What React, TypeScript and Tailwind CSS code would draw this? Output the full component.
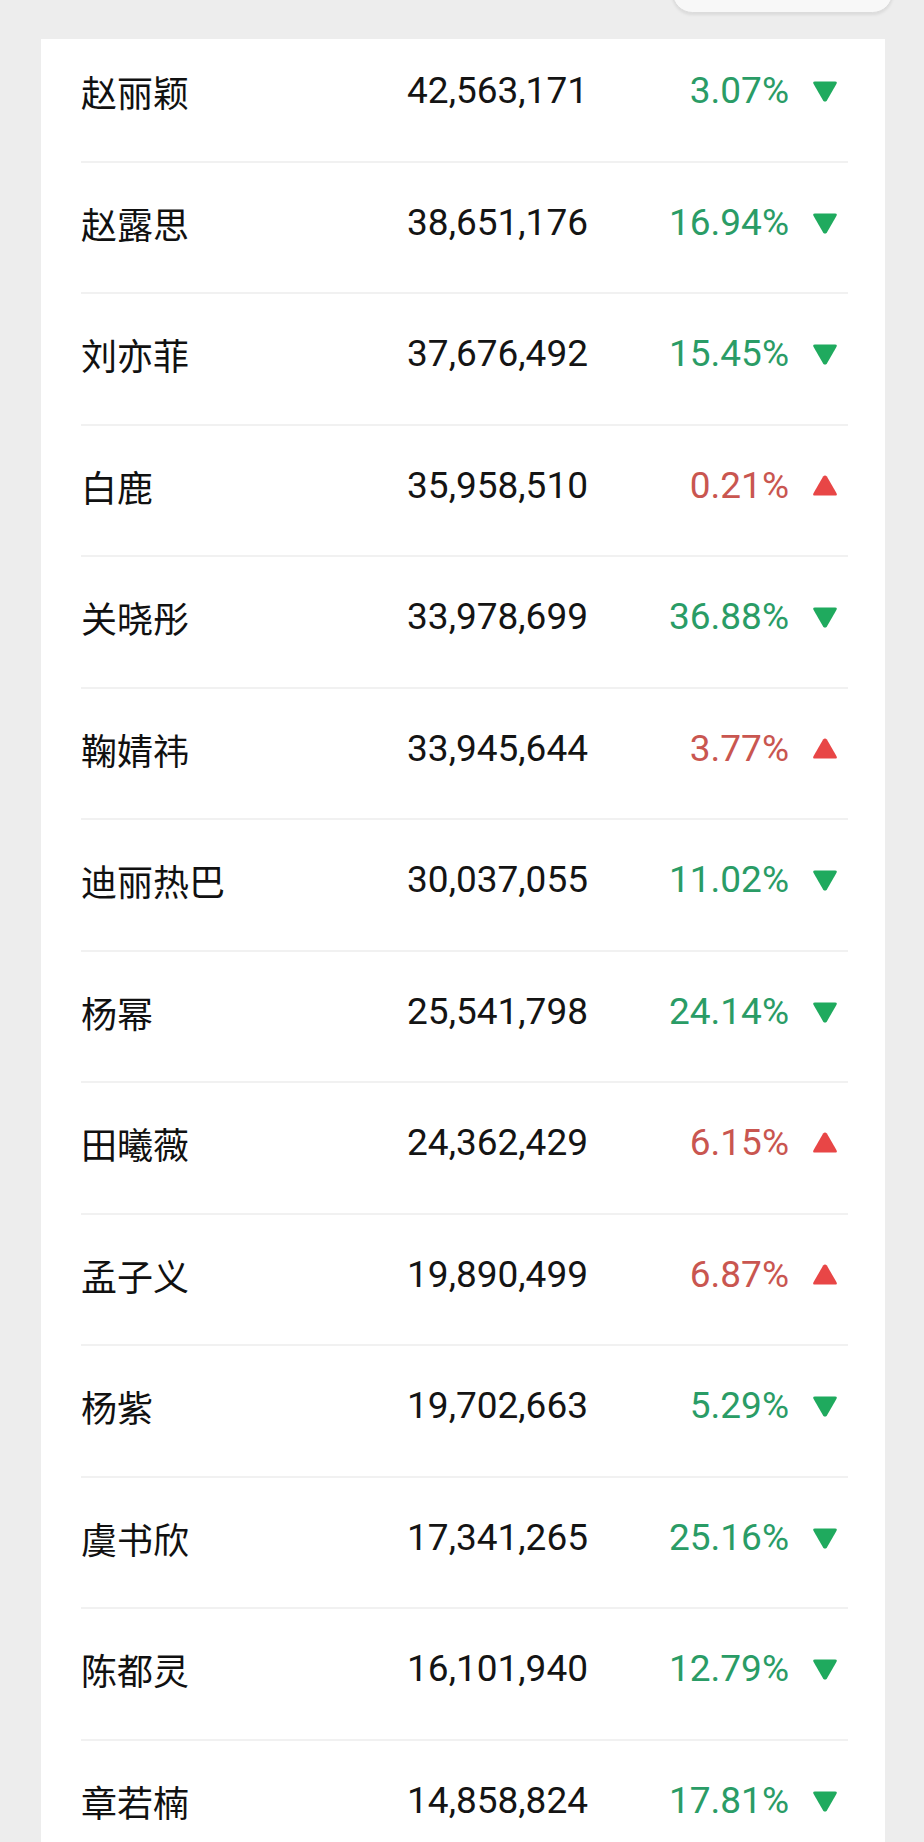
const rows = [
  { name: "赵丽颖", value: "42,563,171", pct: "3.07%", up: false },
  { name: "赵露思", value: "38,651,176", pct: "16.94%", up: false },
  { name: "刘亦菲", value: "37,676,492", pct: "15.45%", up: false },
  { name: "白鹿", value: "35,958,510", pct: "0.21%", up: true },
  { name: "关晓彤", value: "33,978,699", pct: "36.88%", up: false },
  { name: "鞠婧祎", value: "33,945,644", pct: "3.77%", up: true },
  { name: "迪丽热巴", value: "30,037,055", pct: "11.02%", up: false },
  { name: "杨幂", value: "25,541,798", pct: "24.14%", up: false },
  { name: "田曦薇", value: "24,362,429", pct: "6.15%", up: true },
  { name: "孟子义", value: "19,890,499", pct: "6.87%", up: true },
  { name: "杨紫", value: "19,702,663", pct: "5.29%", up: false },
  { name: "虞书欣", value: "17,341,265", pct: "25.16%", up: false },
  { name: "陈都灵", value: "16,101,940", pct: "12.79%", up: false },
  { name: "章若楠", value: "14,858,824", pct: "17.81%", up: false },
];

function Arrow({ up }: { up: boolean }) {
  // rounded triangle, pointing down (falling) or up (rising)
  return (
    <svg width="26" height="22" viewBox="0 0 26 22" className={up ? "" : "rotate-180"}>
      <path
        d="M11.1 1.6 Q13 -0.8 14.9 1.6 L24.4 18 Q25.7 20.6 23 20.6 H3 Q0.3 20.6 1.6 18 Z"
        fill={up ? "#e84646" : "#1faa5e"}
      />
    </svg>
  );
}

export default function App() {
  return (
    <div
      className="h-[1842px] w-[924px] overflow-hidden bg-[#ededed] pl-[41px] pr-[39px]"
      style={{ fontFamily: 'Roboto, "Noto Sans CJK SC", sans-serif' }}
    >
      {/* top: bottom edge of a pill control, cut off by the screen */}
      <div className="flex h-[39px] justify-end">
        <div className="mr-[-8px] -mt-[28px] h-[41px] w-[221px] rounded-full border border-[#dcdcdc] bg-[#f8f8f8] shadow-[0_2px_3px_rgba(0,0,0,0.08)]" />
      </div>

      <div className="h-[1803px] bg-white pl-[40px] pr-[37px] pt-[30px]">
        {rows.map((r, i) => (
          <div key={r.name}>
            {i > 0 && <div className="h-[2px] bg-[#f1f1f1]" />}
            <div className={`flex h-[44px] items-center ${i > 0 ? "mt-[38px]" : ""} mb-[47.5px]`}>
              <div
                className="flex-1 text-[36px] leading-[44px] text-[#111]"
                style={{ fontFamily: '"Noto Sans CJK SC", sans-serif' }}
              >
                {r.name}
              </div>
              <div className="w-[220px] text-right text-[37px] leading-[44px] text-[#141414]">{r.value}</div>
              <div
                className={`w-[201px] text-right text-[37px] leading-[44px] ${
                  r.up ? "text-[#c95650]" : "text-[#2a9c66]"
                }`}
              >
                {r.pct}
              </div>
              <div className="ml-[23px] mr-[10px] flex w-[26px] items-center">
                <Arrow up={r.up} />
              </div>
            </div>
          </div>
        ))}
      </div>
    </div>
  );
}
